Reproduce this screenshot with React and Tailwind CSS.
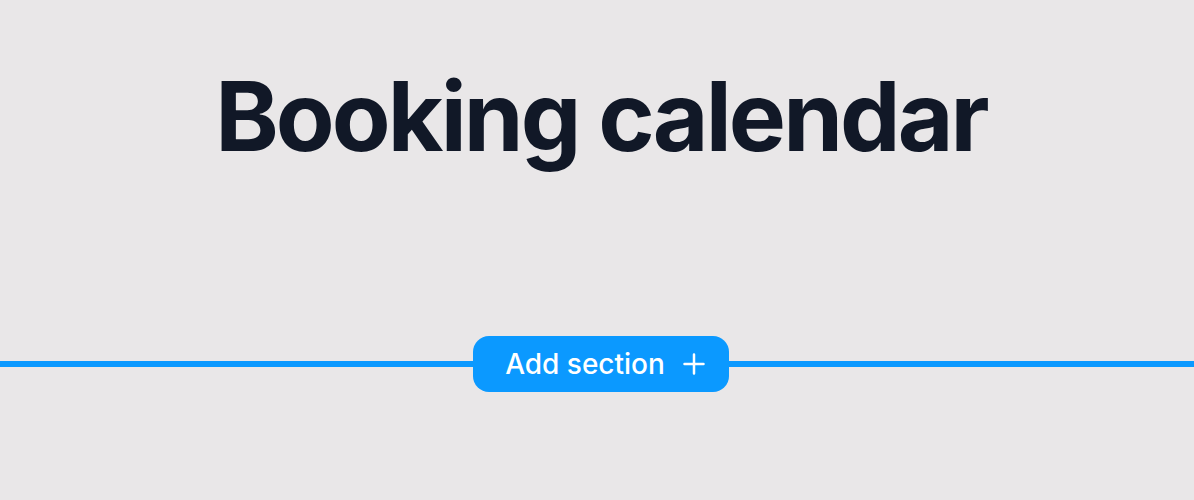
import React from 'react';

const PlusIcon = () => (
  <svg width="22" height="22" viewBox="0 0 22 22" fill="none" stroke="currentColor" strokeWidth="2.5" strokeLinecap="round">
    <path d="M11 1.5v19M1.5 11h19" />
  </svg>
);

const App = () => {
  return (
    <div
      className="w-full h-[500px] bg-[#e9e7e8] flex flex-col overflow-hidden"
      style={{ fontFamily: 'Inter, "Noto Sans", sans-serif' }}
    >
      <div className="pt-[68px] pl-2 flex justify-center">
        <h1 className="text-[96px] leading-none font-bold tracking-[-0.03em] text-[#111827]">
          Booking calendar
        </h1>
      </div>

      <div className="mt-[172px] flex items-center">
        <div className="flex-[1_1_8px] h-[6px] bg-[#0b99ff]" />
        <button
          type="button"
          className="h-14 w-64 pl-2 rounded-2xl bg-[#0b99ff] text-white flex items-center justify-center gap-[18px] text-[28px] font-medium"
        >
          <span>Add section</span>
          <PlusIcon />
        </button>
        <div className="flex-1 h-[6px] bg-[#0b99ff]" />
      </div>
    </div>
  );
};

export default App;
